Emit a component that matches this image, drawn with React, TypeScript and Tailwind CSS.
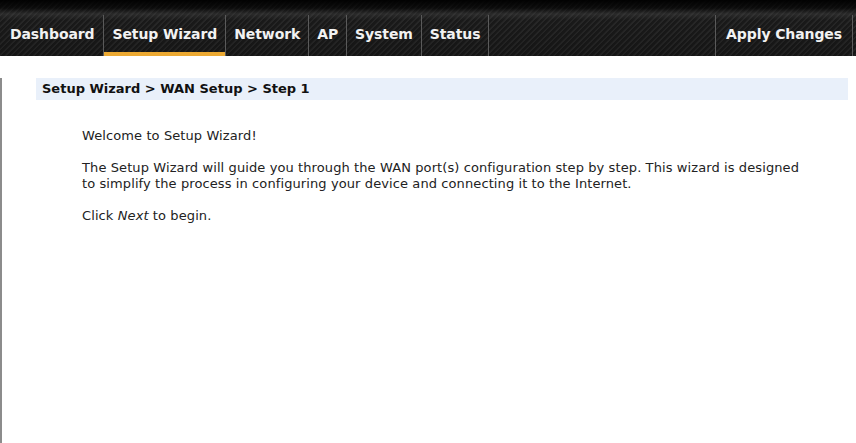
const tabs = [
  { label: "Dashboard", first: true },
  { label: "Setup Wizard", active: true },
  { label: "Network" },
  { label: "AP" },
  { label: "System" },
  { label: "Status" },
];

function NavBar() {
  return (
    <div className="relative flex h-[56px] items-end bg-[linear-gradient(180deg,rgba(0,0,0,0.95)_0px,rgba(0,0,0,0.6)_8px,rgba(70,70,70,0.35)_14px,rgba(0,0,0,0.1)_20px,rgba(0,0,0,0.25)_56px),repeating-linear-gradient(135deg,#1c1c1c_0px,#1c1c1c_2px,#2c2c2c_3px,#2c2c2c_4px)] font-['DejaVu_Sans',Verdana,sans-serif]">
      <nav className="flex h-[41px] items-stretch text-[14px] font-bold text-[#f2f2f2]">
        {tabs.map((t) => (
          <div
            key={t.label}
            className={`relative flex items-center border-r border-[#5a5a5a] ${
              t.first ? "pl-[10px] pr-[9px]" : "px-2"
            }`}
          >
            <span className="pb-[3px] tracking-[-0.1px]">{t.label}</span>
            {t.active && (
              <span className="absolute inset-x-0 bottom-0 h-[4px] bg-[#eca932]" />
            )}
          </div>
        ))}
      </nav>
      <div className="flex-1" />
      <div className="mr-[3px] flex h-[41px] items-center border-x border-[#5a5a5a] px-[10px] text-[14px] font-bold text-[#f2f2f2]">
        <span className="pb-[3px] tracking-[-0.1px]">Apply Changes</span>
      </div>
    </div>
  );
}

export default function App() {
  return (
    <div className="min-h-screen bg-white">
      <NavBar />
      <main className="min-h-[387px] border-l-2 border-[#8c8c8c] pb-10 font-['DejaVu_Sans',Verdana,sans-serif] text-[13px] text-[#222]">
        <div className="ml-[34px] mr-[8px] mt-[22px] flex h-[22px] items-center bg-[#e9f0fa] pl-[6px] font-bold text-[#111]">
          Setup Wizard &gt; WAN Setup &gt; Step 1
        </div>
        <div className="ml-[80px] mr-[52px] mt-[28px] space-y-4 leading-4 tracking-[0.1px]">
          <p>Welcome to Setup Wizard!</p>
          <p>
            The Setup Wizard will guide you through the WAN port(s) configuration step by step. This
            wizard is designed to simplify the process in configuring your device and connecting it to
            the Internet.
          </p>
          <p>
            Click <em>Next</em> to begin.
          </p>
        </div>
      </main>
    </div>
  );
}
